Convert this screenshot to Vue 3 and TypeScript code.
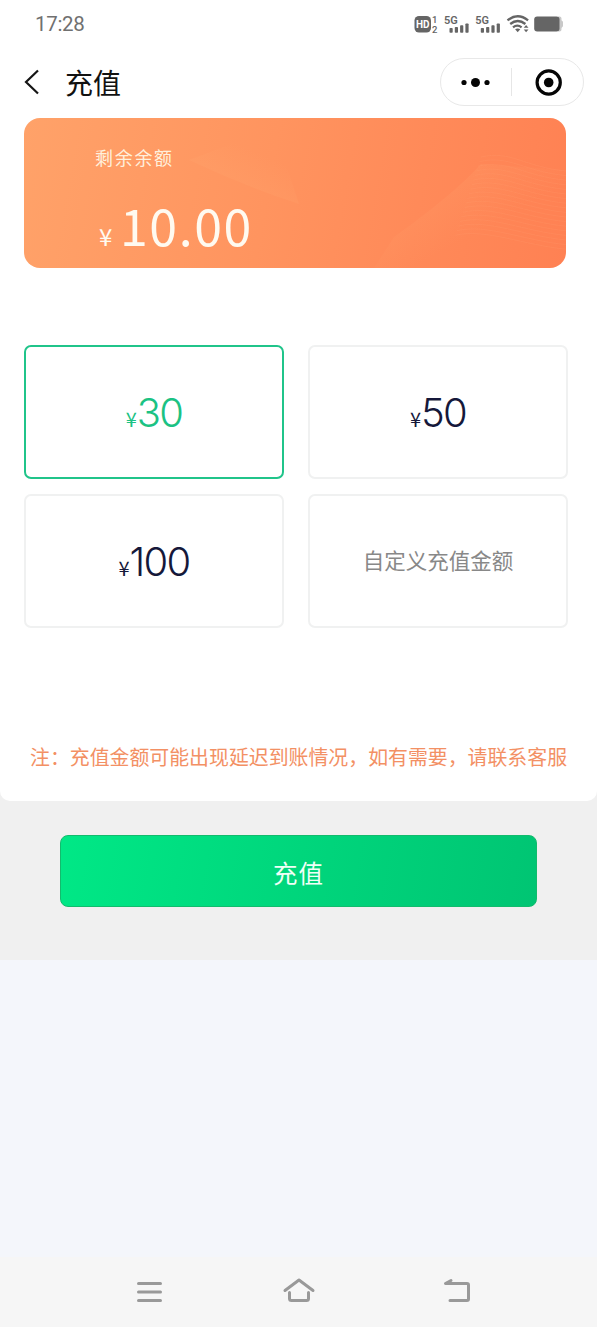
<script setup lang="ts">
import { ref } from 'vue'

interface Option {
  id: number
  amount?: number
  label?: string
}

const options: Option[] = [
  { id: 1, amount: 30 },
  { id: 2, amount: 50 },
  { id: 3, amount: 100 },
  { id: 4, label: '自定义充值金额' },
]
const selected = ref(1)
const balance = '10.00'

// Fine wave lines in the card's right corner
const waves = Array.from({ length: 18 }, (_, i) => {
  const y = 39 + i * 4.6
  const x = 457 - i * 1.5
  return `M${x} ${y} C${x + 30} ${y - 7} 500 ${y + 10} 542 ${y + 14}`
})
</script>

<template>
  <div class="page">
    <div class="sheet">
      <div class="status">
        <span class="time">17:28</span>
        <svg class="signals" width="121" height="22" viewBox="0 0 121 22">
          <g fill="#656565">
            <rect x="1.500" y="3" width="16.500" height="16.500" rx="4.500" />
            <text x="9.700" y="15" font-size="10" font-weight="700" text-anchor="middle" fill="#fff">HD</text>
            <text x="19" y="10" font-size="9.500" font-weight="500">1</text>
            <text x="19" y="19.500" font-size="9.500" font-weight="500">2</text>
            <g v-for="dx in [0, 31.3]" :key="dx" :transform="`translate(${dx} 0)`">
              <text x="31" y="10.500" font-size="11" font-weight="600">5G</text>
              <rect x="36.500" y="15" width="3.200" height="4.700" rx=".8" />
              <rect x="41.800" y="14" width="3.200" height="5.700" rx=".8" />
              <rect x="47.100" y="12.300" width="3.200" height="7.400" rx=".8" />
              <rect x="52.400" y="10.500" width="3.200" height="9.200" rx=".8" />
            </g>
            <path d="M102.100 16.200q2.600-1.600 5.200 0l-2.600 3z" />
            <path d="m110.700 14.800 2.400-2.800 2.400 2.800zM110.700 16.400l2.400 2.800 2.400-2.800z" />
          </g>
          <g fill="none" stroke="#656565" stroke-width="2.300">
            <path d="M94.500 7.400q10.300-8.200 20.600 0" />
            <path d="M97.200 11q7.600-6 15.200 0" />
            <path d="M100 14.300q4.300-3.400 8.600 0" />
          </g>
        </svg>
        <svg class="battery" width="30" height="16" viewBox="0 0 30 16">
          <path d="M24 .6h1.500q2 0 2 2v1.600l1.500 1.600v4.400L27.500 12v1.500q0 2-2 2H24z" fill="#c9c9c9" />
          <rect x=".2" y=".6" width="25.300" height="15" rx="3" fill="#656565" />
        </svg>
      </div>

      <header class="header">
        <svg class="back" width="16" height="26" viewBox="0 0 16 26">
          <path d="M14 1.500 2 13l12 11.500" fill="none" stroke="#151515" stroke-width="2.200" />
        </svg>
        <h1 class="title">充值</h1>
        <div class="capsule">
          <svg width="142" height="46" viewBox="0 0 142 46">
            <g fill="#050505">
              <circle cx="23" cy="23.500" r="2.600" />
              <circle cx="34.500" cy="23.500" r="4.500" />
              <circle cx="46" cy="23.500" r="2.600" />
              <circle cx="107.700" cy="23.500" r="4.800" />
            </g>
            <path d="M70.500 9v28" stroke="#e6e6e6" />
            <circle cx="107.700" cy="23.500" r="11.600" fill="none" stroke="#050505" stroke-width="3.200" />
          </svg>
        </div>
      </header>

      <section class="card">
        <svg class="decor" width="542" height="150" viewBox="0 0 542 150">
          <defs>
            <linearGradient id="fold" x1="0" y1="0" x2="1" y2="1">
              <stop offset="0" stop-color="#ffb27a" stop-opacity=".26" />
              <stop offset=".6" stop-color="#ffb27a" stop-opacity="0" />
            </linearGradient>
            <linearGradient id="ray" gradientUnits="userSpaceOnUse" x1="225" y1="67" x2="238" y2="36">
              <stop offset="0" stop-color="#ffac74" stop-opacity=".16" />
              <stop offset="1" stop-color="#ffac74" stop-opacity="0" />
            </linearGradient>
          </defs>
          <path d="M165 42 Q220 68 275 86 L250 10Z" fill="url(#ray)" />
          <path d="M370 119 Q430 76 457 46 L542 52 L542 150 L350 150Z" fill="url(#fold)" />
          <path v-for="(d, i) in waves" :key="i" :d="d" fill="none" stroke="#ffa071" stroke-opacity=".2" />
        </svg>
        <p class="card-label">剩余余额</p>
        <p class="balance"><span class="yen">¥</span><span>{{ balance }}</span></p>
      </section>

      <div class="options">
        <button
          v-for="o in options"
          :key="o.id"
          type="button"
          class="option"
          :class="{ active: selected === o.id }"
          @click="selected = o.id"
        >
          <template v-if="o.amount"><span class="unit">¥</span><span class="amount">{{ o.amount }}</span></template>
          <span v-else class="custom">{{ o.label }}</span>
        </button>
      </div>

      <p class="note">注：充值金额可能出现延迟到账情况，如有需要，请联系客服</p>
    </div>

    <div class="action">
      <button type="button" class="submit">充值</button>
    </div>

    <nav class="navbar">
      <svg width="40" height="30" viewBox="0 0 40 30">
        <path d="M8.500 6.500h22M8.500 15h22M8.500 23.500h22" />
      </svg>
      <svg width="40" height="30" viewBox="0 0 40 30">
        <path d="M6 13.500 20 3l14 10.500M10.500 15.500v6q0 2 2 2h15q2 0 2-2v-6" />
      </svg>
      <svg width="40" height="30" viewBox="0 0 40 30">
        <path d="M14 3.500 8.500 6.500H30q1.500 0 1.500 1.500v14q0 1.500-1.500 1.500H13" />
      </svg>
    </nav>
  </div>
</template>

<style>
body {
  margin: 0;
  background: #f4f6fb;
}
</style>

<style scoped>
.page {
  width: 597px;
  height: 1327px;
  display: flex;
  flex-direction: column;
  overflow: hidden;
  background: linear-gradient(#f0f0f0 0 960px, #f4f6fb 960px);
  font-family: 'Noto Sans CJK SC', sans-serif;
}
p,
h1 {
  margin: 0;
  font-weight: 400;
}
button {
  box-sizing: border-box;
  padding: 0;
  font-family: inherit;
}
.sheet {
  height: 801px;
  background: #fff;
  border-radius: 0 0 10px 10px;
}
.status {
  display: flex;
  align-items: center;
  height: 48px;
  padding-left: 35px;
  font-family: Roboto, sans-serif;
  color: #707070;
}
.time {
  flex: none;
  width: 378px;
  font-size: 20.500px;
  line-height: 48px;
  letter-spacing: -0.3px;
}
.signals,
.battery {
  flex: none;
}
.header {
  display: flex;
  align-items: center;
  height: 70px;
  padding: 0 13px 0 24px;
  box-sizing: border-box;
}
.back {
  margin-top: -2px;
}
.title {
  margin: -2px 0 0 25px;
  font-size: 28px;
  line-height: 40px;
  color: #111;
}
.capsule {
  width: 142px;
  height: 46px;
  margin: -2px 0 0 auto;
  border: 1px solid #e8e8e8;
  border-radius: 24px;
}
.capsule svg {
  display: block;
}
.card {
  position: relative;
  box-sizing: border-box;
  width: 542px;
  height: 150px;
  margin-left: 24px;
  padding: 27px 0 0 71px;
  border-radius: 16px;
  overflow: hidden;
  background: linear-gradient(100deg, #ffa269 0%, #ff945f 45%, #ff8a59 72%, #ff8153 100%);
  color: #fffaf0;
}
.decor {
  position: absolute;
  inset: 0;
}
.card-label {
  position: relative;
  font-size: 18px;
  line-height: 24px;
  letter-spacing: 1.700px;
  color: #fff0dc;
}
.balance {
  position: relative;
  display: flex;
  align-items: baseline;
  margin-top: 18px;
  font-size: 50px;
  line-height: 74px;
  letter-spacing: 1.600px;
}
.yen {
  width: 25px;
  margin-left: 4px;
  margin-right: -4px;
  font-size: 24px;
}
.options {
  display: grid;
  grid-template-columns: 260px 260px;
  grid-auto-rows: 134px;
  gap: 15px 24px;
  margin: 77px 0 0 24px;
}
.option {
  display: flex;
  align-items: baseline;
  justify-content: center;
  border: 2px solid #f0f1f1;
  border-radius: 7px;
  background: #fff;
  color: #15183a;
  line-height: 130px;
}
.option.active {
  border-color: #20c48a;
  color: #1bc283;
}
.unit {
  font-size: 20px;
}
.amount {
  font-family: Inter, sans-serif;
  font-size: 40px;
  font-weight: 300;
  line-height: 132px;
  letter-spacing: -1.700px;
}
.custom {
  font-size: 21.500px;
  line-height: 128px;
  color: #888;
}
.note {
  margin: 114px 0 0 30px;
  font-size: 19.900px;
  line-height: 30px;
  color: #f39064;
  white-space: nowrap;
}
.action {
  height: 159px;
  padding: 34px 60px 0;
  box-sizing: border-box;
}
.submit {
  display: block;
  width: 477px;
  height: 72px;
  border: 1px solid #12bb6d;
  border-radius: 8px;
  background: linear-gradient(100deg, #00e886 0%, #00d67c 50%, #00c573 100%);
  color: #f0fff6;
  font-size: 24.500px;
  line-height: 70px;
  letter-spacing: 1px;
  padding-top: 2px;
}
.navbar {
  display: grid;
  grid-template-columns: 149px 158px 40px;
  box-sizing: border-box;
  height: 70px;
  margin-top: auto;
  padding: 20px 0 0 129.500px;
  background: #f6f6f6;
}
.navbar path {
  fill: none;
  stroke: #999;
  stroke-width: 3;
  stroke-linecap: round;
  stroke-linejoin: round;
}
</style>
